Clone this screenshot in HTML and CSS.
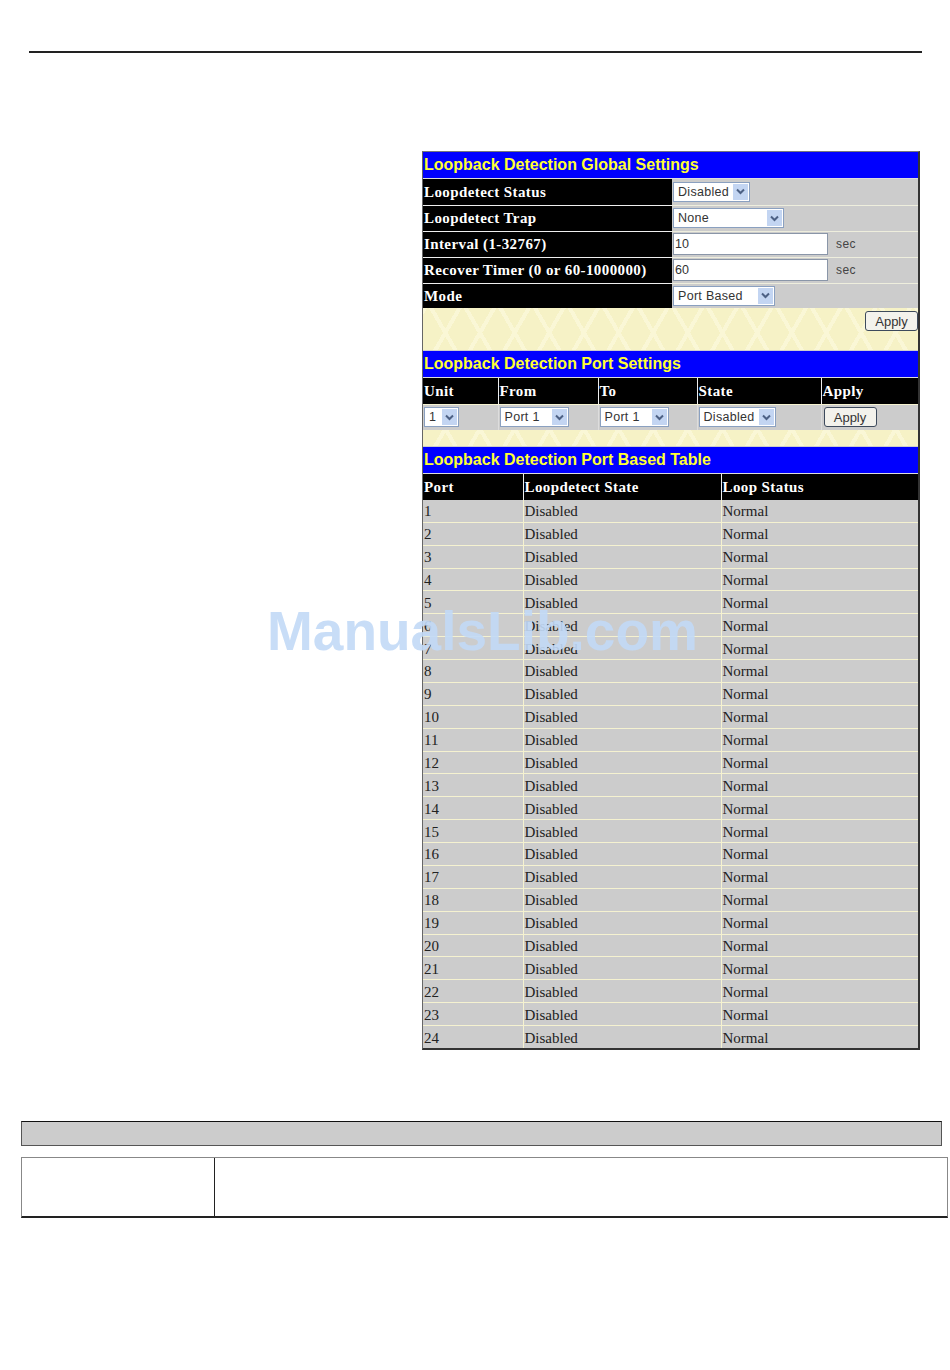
FILE: index.html
```html
<!DOCTYPE html>
<html lang="en">
<head>
  <meta charset="UTF-8" />
  <title>Loopback Detection</title>
  <link rel="stylesheet" href="styles.css">
</head>
<body>
  <hr class="top-rule">

  <div class="panel">
    <div class="title">Loopback Detection Global Settings</div>
    <table class="form-table">
      <tr>
        <th>Loopdetect Status</th>
        <td><span class="select w-status"><span class="select-text">Disabled</span><span class="arrow"><svg width="9" height="7" viewBox="0 0 9 7"><path d="M1 1.5l3.5 3.5 3.5-3.5" /></svg></span></span></td>
      </tr>
      <tr>
        <th>Loopdetect Trap</th>
        <td><span class="select w-trap"><span class="select-text">None</span><span class="arrow"><svg width="9" height="7" viewBox="0 0 9 7"><path d="M1 1.5l3.5 3.5 3.5-3.5" /></svg></span></span></td>
      </tr>
      <tr>
        <th>Interval (1-32767)</th>
        <td><input class="text-input" type="text" value="10"><span class="unit">sec</span></td>
      </tr>
      <tr>
        <th>Recover Timer (0 or 60-1000000)</th>
        <td><input class="text-input" type="text" value="60"><span class="unit">sec</span></td>
      </tr>
      <tr>
        <th>Mode</th>
        <td><span class="select w-mode"><span class="select-text">Port Based</span><span class="arrow"><svg width="9" height="7" viewBox="0 0 9 7"><path d="M1 1.5l3.5 3.5 3.5-3.5" /></svg></span></span></td>
      </tr>
    </table>
    <div class="band band-apply"><button class="btn btn-right">Apply</button></div>

    <div class="title">Loopback Detection Port Settings</div>
    <table class="port-table">
      <tr>
        <th class="c-unit">Unit</th>
        <th class="c-from">From</th>
        <th class="c-to">To</th>
        <th class="c-state">State</th>
        <th>Apply</th>
      </tr>
      <tr>
        <td><span class="select w-unit"><span class="select-text">1</span><span class="arrow"><svg width="9" height="7" viewBox="0 0 9 7"><path d="M1 1.5l3.5 3.5 3.5-3.5" /></svg></span></span></td>
        <td><span class="select w-port"><span class="select-text">Port 1</span><span class="arrow"><svg width="9" height="7" viewBox="0 0 9 7"><path d="M1 1.5l3.5 3.5 3.5-3.5" /></svg></span></span></td>
        <td><span class="select w-port"><span class="select-text">Port 1</span><span class="arrow"><svg width="9" height="7" viewBox="0 0 9 7"><path d="M1 1.5l3.5 3.5 3.5-3.5" /></svg></span></span></td>
        <td><span class="select w-status"><span class="select-text">Disabled</span><span class="arrow"><svg width="9" height="7" viewBox="0 0 9 7"><path d="M1 1.5l3.5 3.5 3.5-3.5" /></svg></span></span></td>
        <td><button class="btn">Apply</button></td>
      </tr>
    </table>
    <div class="band band-thin"></div>

    <div class="title">Loopback Detection Port Based Table</div>
    <table class="status-table">
      <tr><th class="c-port">Port</th><th class="c-state2">Loopdetect State</th><th>Loop Status</th></tr>
      <tr><td>1</td><td>Disabled</td><td>Normal</td></tr>
      <tr><td>2</td><td>Disabled</td><td>Normal</td></tr>
      <tr><td>3</td><td>Disabled</td><td>Normal</td></tr>
      <tr><td>4</td><td>Disabled</td><td>Normal</td></tr>
      <tr><td>5</td><td>Disabled</td><td>Normal</td></tr>
      <tr><td>6</td><td>Disabled</td><td>Normal</td></tr>
      <tr><td>7</td><td>Disabled</td><td>Normal</td></tr>
      <tr><td>8</td><td>Disabled</td><td>Normal</td></tr>
      <tr><td>9</td><td>Disabled</td><td>Normal</td></tr>
      <tr><td>10</td><td>Disabled</td><td>Normal</td></tr>
      <tr><td>11</td><td>Disabled</td><td>Normal</td></tr>
      <tr><td>12</td><td>Disabled</td><td>Normal</td></tr>
      <tr><td>13</td><td>Disabled</td><td>Normal</td></tr>
      <tr><td>14</td><td>Disabled</td><td>Normal</td></tr>
      <tr><td>15</td><td>Disabled</td><td>Normal</td></tr>
      <tr><td>16</td><td>Disabled</td><td>Normal</td></tr>
      <tr><td>17</td><td>Disabled</td><td>Normal</td></tr>
      <tr><td>18</td><td>Disabled</td><td>Normal</td></tr>
      <tr><td>19</td><td>Disabled</td><td>Normal</td></tr>
      <tr><td>20</td><td>Disabled</td><td>Normal</td></tr>
      <tr><td>21</td><td>Disabled</td><td>Normal</td></tr>
      <tr><td>22</td><td>Disabled</td><td>Normal</td></tr>
      <tr><td>23</td><td>Disabled</td><td>Normal</td></tr>
      <tr><td>24</td><td>Disabled</td><td>Normal</td></tr>
    </table>
  </div>

  <div class="gray-bar"></div>
  <div class="desc-box">
    <div class="desc-left"></div>
    <div class="desc-right"></div>
  </div>

  <div class="watermark">ManualsLib.com</div>
</body>
</html>
```

FILE: styles.css
```css
body {
  margin: 0;
  height: 1370px;
  overflow: hidden;
  position: relative;
  background-color: white;
  font-family: "Liberation Serif", serif;
  color: #222;
}


.top-rule {
  width: 893px;
  height: 2px;
  margin: 51px 0 0 29px;
  border: none;
  background-color: #222;
}


.panel {
  width: 495px;
  margin: 98px 0 0 422px;
  border-top: 1px solid #777;
  border-left: 1px solid #666;
  border-right: 2px solid #333;
  border-bottom: 2px solid #333;
  background-color: #ccc;
}

.title {
  height: 26px;
  line-height: 25px;
  padding-left: 1px;
  background-color: #0000ff;
  color: #ffff33;
  font-family: "Liberation Sans", sans-serif;
  font-weight: bold;
  font-size: 16px;
  border-bottom: 1px solid #ddd;
}


table {
  width: 100%;
  border-collapse: collapse;
  table-layout: fixed;
}

th {
  box-sizing: border-box;
  background-color: black;
  color: white;
  font-weight: bold;
  font-size: 15px;
  letter-spacing: 0.4px;
  text-align: left;
  padding: 1px 0 0 1px;
}


.form-table th {
  width: 249px;
  height: 26px;
  border-bottom: 1px solid #eee;
}

.form-table td {
  box-sizing: border-box;
  padding: 0 0 0 1px;
  height: 26px;
  border-bottom: 1px solid #eeeedd;
}

.form-table tr:last-child th,
.form-table tr:last-child td {
  height: 25px;
  border-bottom: none;
}

.select {
  display: inline-flex;
  align-items: center;
  justify-content: space-between;
  box-sizing: border-box;
  height: 20px;
  vertical-align: middle;
  padding: 1px;
  border: 1px solid #8aa0c0;
  background-color: white;
  font-family: "Liberation Sans", sans-serif;
  font-size: 12.5px;
  color: #333;
}

.select-text {
  padding-left: 3px;
  letter-spacing: 0.3px;
}

.arrow {
  display: flex;
  align-items: center;
  justify-content: center;
  width: 15px;
  height: 16px;
  background-color: #c3d5f2;
}

.arrow svg path {
  fill: none;
  stroke: #4d6185;
  stroke-width: 2;
}

.w-status { width: 77px; }
.w-trap { width: 111px; }
.w-mode { width: 102px; }
.w-unit { width: 35px; }
.w-port { width: 69px; }

.text-input {
  box-sizing: border-box;
  width: 155px;
  height: 22px;
  padding: 0 1px;
  vertical-align: middle;
  border: 1px solid #8a96a8;
  background-color: white;
  font-family: "Liberation Sans", sans-serif;
  font-size: 12.5px;
  color: #333;
}

.unit {
  margin-left: 8px;
  font-family: "Liberation Sans", sans-serif;
  font-size: 12px;
  color: #444;
  letter-spacing: 0.4px;
  vertical-align: middle;
}

.btn {
  box-sizing: border-box;
  width: 53px;
  height: 20px;
  padding: 0;
  border: 1px solid #3d4a5c;
  border-radius: 3px;
  background-color: #f3f2ec;
  font-family: "Liberation Sans", sans-serif;
  font-size: 13px;
  color: #333;
}


.band {
  background-color: #f6f2c6;
  background-image:
    repeating-linear-gradient(60deg, transparent 0 26px, #faf7d6 26px 30px),
    repeating-linear-gradient(-60deg, transparent 0 26px, #faf7d6 26px 30px);
}

.band-apply {
  height: 42px;
  margin-bottom: 1px;
  display: flex;
  justify-content: flex-end;
  align-items: flex-start;
  padding-top: 3px;
  box-sizing: border-box;
}

.band-thin {
  height: 16px;
  margin-bottom: 1px;
}


.port-table th {
  height: 26px;
  border-bottom: 1px solid #f5f2d0;
  border-right: 1px solid #eee;
}

.port-table th:last-child {
  border-right: none;
}

.port-table td {
  box-sizing: border-box;
  height: 26px;
  padding: 0 0 0 1px;
  border-right: 1px solid #ddd;
}

.port-table td:last-child {
  border-right: none;
  padding-left: 2px;
}

.c-unit { width: 75px; }
.c-from { width: 100px; }
.c-to { width: 99px; }
.c-state { width: 124px; }


.status-table {
  height: 574px;
}

.status-table th {
  height: 26px;
  border-right: 1px solid #eee;
}

.status-table th:last-child,
.status-table td:last-child {
  border-right: none;
}

.status-table td {
  box-sizing: border-box;
  padding: 2px 0 0 1px;
  font-size: 15px;
  line-height: 17px;
  border-right: 1px solid #f5f2d0;
  border-bottom: 1px solid #f5f2d0;
}

.status-table tr:last-child td {
  border-bottom: none;
}

.c-port { width: 100px; }
.c-state2 { width: 198px; }


.gray-bar {
  box-sizing: border-box;
  width: 921px;
  height: 25px;
  margin: 71px 0 0 21px;
  background-color: #ccc;
  border: 1px solid #555;
  border-top-color: #111;
}

.desc-box {
  box-sizing: border-box;
  display: flex;
  width: 927px;
  height: 61px;
  margin: 11px 0 0 21px;
  border: 1px solid #888;
  border-bottom: 2px solid #222;
}

.desc-left {
  width: 192px;
  border-right: 1px solid #222;
}

.desc-right {
  flex: 1;
}


.watermark {
  position: absolute;
  top: 601px;
  left: 267px;
  font-family: "Liberation Sans", sans-serif;
  font-weight: bold;
  font-size: 55px;
  line-height: 60px;
  color: #c3daf7;
  opacity: 0.9;
}
```
